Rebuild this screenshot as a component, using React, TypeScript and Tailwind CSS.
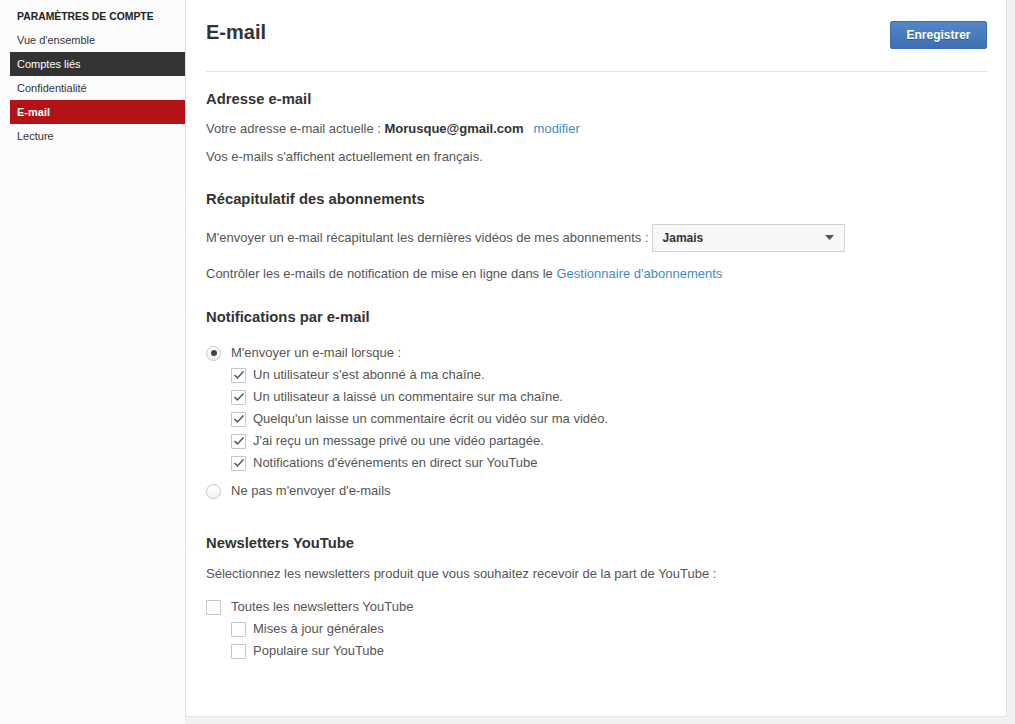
import React from 'react';

const font = { fontFamily: '"Liberation Sans", Arial, sans-serif' };

function Checkbox({ checked }: { checked?: boolean }) {
  return (
    <span className="w-[15px] h-[15px] border border-[#c6c6c6] bg-white rounded-[1px] flex items-center justify-center shrink-0">
      {checked && (
        <svg width="12" height="10" viewBox="0 0 12 10">
          <path d="M1.5 5 L4.4 7.9 L10.5 1.5" fill="none" stroke="#555" strokeWidth="1.5" />
        </svg>
      )}
    </span>
  );
}

function Radio({ checked }: { checked?: boolean }) {
  return (
    <span className="w-[15px] h-[15px] rounded-full border border-[#c6c6c6] bg-gradient-to-b from-white to-[#f3f3f3] flex items-center justify-center shrink-0">
      {checked && <span className="w-[6px] h-[6px] rounded-full bg-[#444]" />}
    </span>
  );
}

const navItems = [
  { label: "Vue d'ensemble", style: 'text-[#333]' },
  { label: 'Comptes liés', style: 'bg-[#333333] text-white' },
  { label: 'Confidentialité', style: 'text-[#333]' },
  { label: 'E-mail', style: 'bg-[#b31217] text-white font-bold' },
  { label: 'Lecture', style: 'text-[#333]' },
];

const notifications = [
  "Un utilisateur s'est abonné à ma chaîne.",
  'Un utilisateur a laissé un commentaire sur ma chaîne.',
  "Quelqu'un laisse un commentaire écrit ou vidéo sur ma vidéo.",
  "J'ai reçu un message privé ou une vidéo partagée.",
  "Notifications d'événements en direct sur YouTube",
];

const heading = 'h-[18px] leading-[18px] font-bold text-[#333] text-[14.8px]';

export default function App() {
  return (
    <div className="w-[1015px] h-[724px] bg-[#f1f1f1] flex text-[13px] text-[#555] overflow-hidden" style={font}>
      {/* Sidebar */}
      <div className="w-[185px] bg-[#fbfbfb] pl-[10px] pt-[9px] shrink-0">
        <div className="pl-[7px] text-[10.4px] font-bold text-[#222] h-[15px] leading-[15px]">PARAMÈTRES DE COMPTE</div>
        <div className="mt-[4px]">
          {navItems.map((item) => (
            <div key={item.label} className={`h-[24px] leading-[24px] pl-[7px] text-[11px] ${item.style}`}>
              {item.label}
            </div>
          ))}
        </div>
      </div>

      {/* Main panel */}
      <div className="w-[822px] h-[717px] bg-white border border-[#e2e2e2] border-t-0 pl-[20px] pr-[19px] shrink-0">
        <div className="h-[72px] flex justify-between items-start pt-[21px] border-b border-[#e2e2e2]">
          <h1 className="text-[20px] font-bold text-[#333] leading-[20px] pt-[1px]">E-mail</h1>
          <button className="w-[97px] h-[28px] rounded-[2px] border border-[#3f6fb0] bg-gradient-to-b from-[#5587c8] to-[#3d6fb4] text-white text-[12px] font-bold [text-shadow:0_1px_0_rgba(0,0,0,0.25)]">
            Enregistrer
          </button>
        </div>

        {/* Adresse e-mail */}
        <h2 className={`mt-[18px] ${heading}`}>Adresse e-mail</h2>
        <p className="mt-[12px] h-[18px] leading-[18px]">
          Votre adresse e-mail actuelle : <b className="text-[#333]">Morusque@gmail.com</b>
          <a className="ml-[10px] text-[#438bc5]">modifier</a>
        </p>
        <p className="mt-[10px] h-[18px] leading-[18px]">Vos e-mails s'affichent actuellement en français.</p>

        {/* Récapitulatif */}
        <h2 className={`mt-[24px] ${heading}`}>Récapitulatif des abonnements</h2>
        <div className="mt-[16px] h-[27px] flex items-center">
          <span>M'envoyer un e-mail récapitulant les dernières vidéos de mes abonnements :</span>
          <div className="ml-[3px] w-[193px] h-[28px] border border-[#d3d3d3] bg-[#f8f8f8] flex items-center justify-between pl-[10px] pr-[10px]">
            <span className="text-[12px] font-bold text-[#333]">Jamais</span>
            <svg width="9" height="5" viewBox="0 0 9 5">
              <path d="M0 0 H9 L4.5 5 Z" fill="#555" />
            </svg>
          </div>
        </div>
        <p className="mt-[14px] h-[18px] leading-[18px]">
          Contrôler les e-mails de notification de mise en ligne dans le{' '}
          <a className="text-[#438bc5]">Gestionnaire d'abonnements</a>
        </p>

        {/* Notifications */}
        <h2 className={`mt-[25px] ${heading}`}>Notifications par e-mail</h2>
        <div className="mt-[16px]">
          <label className="h-[22px] flex items-center gap-[10px]">
            <Radio checked />
            <span>M'envoyer un e-mail lorsque :</span>
          </label>
          <div className="pl-[25px]">
            {notifications.map((n) => (
              <label key={n} className="h-[22px] flex items-center gap-[7px]">
                <Checkbox checked />
                <span>{n}</span>
              </label>
            ))}
          </div>
          <label className="mt-[6px] h-[22px] flex items-center gap-[10px]">
            <Radio />
            <span>Ne pas m'envoyer d'e-mails</span>
          </label>
        </div>

        {/* Newsletters */}
        <h2 className={`mt-[32px] ${heading}`}>Newsletters YouTube</h2>
        <p className="mt-[13px] h-[18px] leading-[18px]">
          Sélectionnez les newsletters produit que vous souhaitez recevoir de la part de YouTube :
        </p>
        <div className="mt-[13px]">
          <label className="h-[22px] flex items-center gap-[10px]">
            <Checkbox />
            <span>Toutes les newsletters YouTube</span>
          </label>
          <div className="pl-[25px]">
            <label className="h-[22px] flex items-center gap-[7px]">
              <Checkbox />
              <span>Mises à jour générales</span>
            </label>
            <label className="h-[22px] flex items-center gap-[7px]">
              <Checkbox />
              <span>Populaire sur YouTube</span>
            </label>
          </div>
        </div>
      </div>
    </div>
  );
}
